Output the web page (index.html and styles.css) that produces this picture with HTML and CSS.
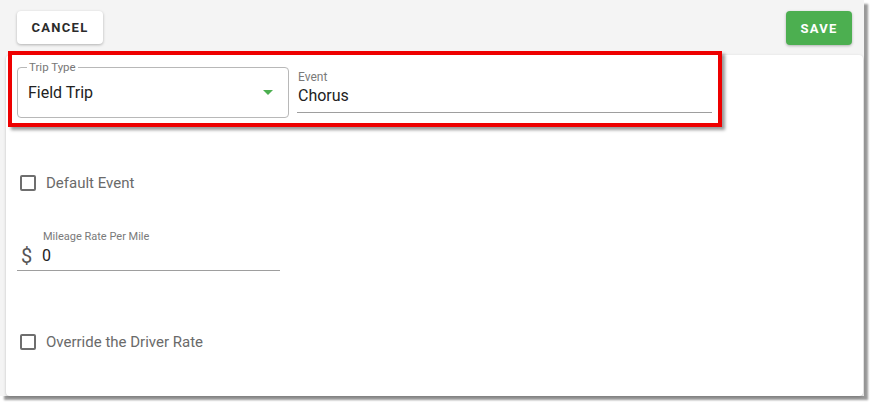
FILE: index.html
```html
<!DOCTYPE html>
<html>
<head>
<meta charset="utf-8">
<link rel="stylesheet" href="styles.css">
</head>
<body>
<div class="frame">
  <div class="toolbar">
    <button class="btn btn-cancel">CANCEL</button>
    <button class="btn btn-save">SAVE</button>
  </div>
  <div class="card">
    <div class="row">
      <fieldset class="select">
        <legend>Trip Type</legend>
        <span class="select-value">Field Trip</span>
        <span class="arrow"></span>
      </fieldset>
      <div class="text-field event">
        <div class="tf-label">Event</div>
        <div class="tf-value">Chorus</div>
      </div>
    </div>
    <label class="check check-default"><span class="box"></span><span class="check-text">Default Event</span></label>
    <div class="text-field mileage">
      <div class="tf-label">Mileage Rate Per Mile</div>
      <div class="tf-line"><span class="prefix">$</span><span class="tf-value">0</span></div>
    </div>
    <label class="check check-override"><span class="box"></span><span class="check-text">Override the Driver Rate</span></label>
  </div>
  <div class="highlight"></div>
</div>
</body>
</html>
```
FILE: styles.css
```css
* { box-sizing: border-box; }
html, body { margin: 0; padding: 0; background: #fff; }
body { font-family: Roboto, "Noto Sans", Arial, sans-serif; min-height: 407px; }

.frame {
  position: relative;
  width: 864px;
  height: 396px;
  background: #f4f4f4;
  box-shadow: 4px 4px 2px rgba(0, 0, 0, 0.4);
}

.toolbar {
  height: 55px;
  display: flex;
  justify-content: space-between;
  align-items: flex-start;
  padding: 11px 12px 0 17px;
}

.btn {
  border: none;
  border-radius: 4px;
  font-family: Roboto, Arial, sans-serif;
  font-weight: 700;
  font-size: 13px;
  letter-spacing: 1.3px;
  padding: 0;
}
.btn-cancel {
  width: 86px;
  height: 33px;
  background: #fff;
  color: #2b2b2b;
  box-shadow: 0 1px 3px rgba(0, 0, 0, 0.28);
}
.btn-save {
  width: 66px;
  height: 34px;
  background: #4caf50;
  color: #fff;
  box-shadow: 0 1px 3px rgba(0, 0, 0, 0.28);
}

.card {
  margin-left: 6px;
  width: 857px;
  height: 341px;
  background: #fff;
  border-radius: 4px;
  box-shadow: 0 1px 3px rgba(0, 0, 0, 0.22);
  padding: 6px 0 0 11px;
  display: flex;
  flex-direction: column;
  align-items: flex-start;
}

.row {
  display: flex;
  gap: 8px;
  align-items: flex-start;
}

.select {
  margin: 0;
  width: 272px;
  height: 57px;
  border: 1px solid #b8b8b8;
  border-radius: 4px;
  padding: 0 15px 0 10px;
  display: flex;
  align-items: center;
  justify-content: space-between;
  position: relative;
}
.select legend {
  font-size: 11.5px;
  color: #777;
  padding: 0 2px;
  margin-left: -1px;
  line-height: 12px;
}
.select-value {
  font-size: 16px;
  color: #222;
  margin-top: -5px;
}
.arrow {
  width: 0;
  height: 0;
  border-left: 5px solid transparent;
  border-right: 5px solid transparent;
  border-top: 5px solid #4caf50;
  margin-top: -5px;
}

.text-field .tf-label {
  font-size: 11px;
  color: #7a7a7a;
}
.event {
  width: 415px;
  margin-top: 8px;
  border-bottom: 1px solid #9e9e9e;
  padding: 0 0 5px 1px;
}
.event .tf-label { font-size: 12px; line-height: 16px; }
.tf-value {
  font-size: 16px;
  color: #222;
  line-height: 22px;
}

.check {
  display: flex;
  align-items: center;
  gap: 10px;
  margin-left: 3px;
}
.box {
  width: 16px;
  height: 16px;
  border: 2px solid #6e6e6e;
  border-radius: 2px;
}
.check-text {
  font-size: 15px;
  color: #6a6a6a;
}
.check-default { margin-top: 56px; }

.mileage {
  margin-top: 38px;
  width: 263px;
  border-bottom: 1px solid #9e9e9e;
  padding-bottom: 2px;
}
.mileage .tf-label { padding-left: 26px; line-height: 14px; }
.tf-line {
  display: flex;
  align-items: center;
  padding-left: 4px;
  margin-top: 0;
}
.prefix {
  font-size: 20px;
  color: #555;
  width: 21px;
  line-height: 24px;
}

.check-override { margin-top: 62px; }

.highlight {
  position: absolute;
  left: 8px;
  top: 51px;
  width: 714px;
  height: 76px;
  border: 4px solid #ee0000;
  box-shadow: 3px 3px 3px rgba(0, 0, 0, 0.4);
}
```
